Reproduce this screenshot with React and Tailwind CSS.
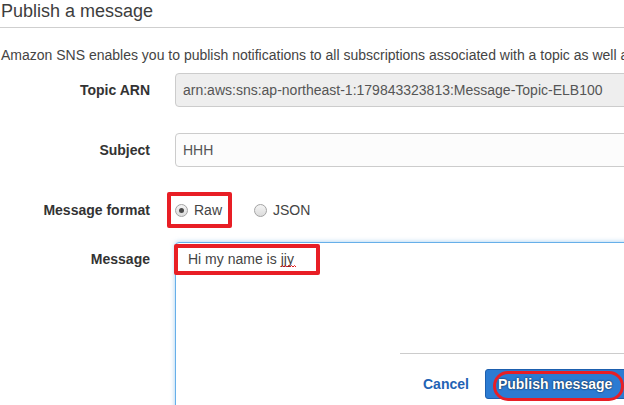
import React from "react";

function Radio({ checked }) {
  return (
    <span className="relative inline-flex h-[13px] w-[13px] items-center justify-center rounded-full border border-[#a3a3a3] bg-gradient-to-b from-[#f4f4f4] to-[#dcdcdc]">
      {checked && <span className="h-[5px] w-[5px] rounded-full bg-[#4a4a4a]" />}
    </span>
  );
}

export default function App() {
  return (
    <div className="relative h-[405px] w-[624px] overflow-hidden bg-white font-['Liberation_Sans',Arial,sans-serif] text-[#444]">
      <div className="h-[28px] border-b border-[#cfcfcf] pl-[1px] text-[18px] leading-[22px] text-[#3d3d3d]">
        Publish a message
      </div>
      <div className="mt-[17px] whitespace-nowrap pl-[1px] text-[14px] leading-[20px] text-[#444]">
        Amazon SNS enables you to publish notifications to all subscriptions associated with a topic as well as to individual endpoints.
      </div>

      <div className="mt-[8px] flex flex-col">
        <div className="flex h-[34px] items-center">
          <div className="w-[150px] shrink-0 text-right text-[14px] font-bold text-[#333]">Topic ARN</div>
          <div className="ml-[25px] flex h-[34px] w-[500px] shrink-0 items-center rounded-[4px] border border-[#cccccc] bg-[#eeeeee] pl-[7px] text-[14px] text-[#555]">
            arn:aws:sns:ap-northeast-1:179843323813:Message-Topic-ELB100
          </div>
        </div>

        <div className="mt-[26px] flex h-[34px] items-center">
          <div className="w-[150px] shrink-0 text-right text-[14px] font-bold text-[#333]">Subject</div>
          <div className="ml-[25px] flex h-[34px] w-[500px] shrink-0 items-center rounded-[4px] border border-[#cccccc] bg-[#fcfcfc] pl-[7px] text-[14px] text-[#555]">
            HHH
          </div>
        </div>

        <div className="mt-[25px] flex h-[36px] items-center">
          <div className="w-[150px] shrink-0 text-right text-[14px] font-bold text-[#333]">Message format</div>
          <div className="ml-[17px] flex items-center">
            <div className="flex h-[36px] w-[65px] items-center rounded-[2px] border-[4px] border-[#e81e25] pl-[4px]">
              <Radio checked />
              <span className="ml-[6px] text-[14px] text-[#444]">Raw</span>
            </div>
            <div className="ml-[22px] flex items-center">
              <Radio />
              <span className="ml-[6px] text-[14px] text-[#444]">JSON</span>
            </div>
          </div>
        </div>

        <div className="mt-[14px] flex">
          <div className="w-[150px] shrink-0 pt-[7px] text-right text-[14px] leading-[20px] font-bold text-[#333]">Message</div>
          <div className="relative ml-[25px] h-[200px] w-[500px] shrink-0 rounded-[4px] border border-[#66afe9] bg-white shadow-[0_0_5px_rgba(102,175,233,0.6)]">
            <div className="absolute left-[-2px] top-[1px] flex h-[31px] w-[146px] items-center rounded-[2px] border-[4px] border-[#e81e25] pl-[10px] text-[14px] text-[#444]">
              Hi my name is
              <span className="relative ml-[4px] inline-block">
                jjy
                <svg className="absolute left-0 top-[16px]" width="16" height="3" viewBox="0 0 16 3">
                  <path d="M0 2 L1.5 0.5 L3 2 L4.5 0.5 L6 2 L7.5 0.5 L9 2 L10.5 0.5 L12 2 L13.5 0.5 L15 2" fill="none" stroke="#e00000" strokeWidth="0.9" />
                </svg>
              </span>
            </div>
          </div>
        </div>
      </div>

      <div className="absolute left-[400px] top-[353px] h-[60px] w-[224px] border-t border-[#cccccc] bg-white">
        <div className="flex items-center pt-[15px]">
          <span className="ml-[23px] text-[14px] font-bold text-[#1f63b5]">Cancel</span>
          <div className="relative ml-[16px] flex h-[30px] w-[142px] shrink-0 items-center rounded-[3px] border border-[#1d5fae] bg-[#2b7bd2] pl-[12px] text-[14px] font-bold text-white [text-shadow:0_0_2px_rgba(0,0,0,0.9)]">
            Publish message
            <span className="absolute left-[7px] top-[1px] h-[30px] w-[131px] rounded-[15px] border-[3px] border-[#e81e25]" />
          </div>
        </div>
      </div>
    </div>
  );
}
